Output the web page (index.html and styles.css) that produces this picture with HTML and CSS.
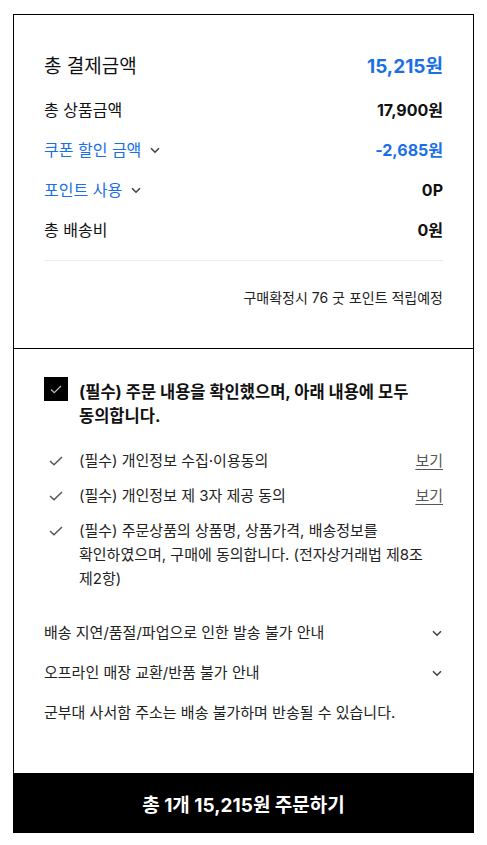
FILE: index.html
```html
<!DOCTYPE html>
<html lang="ko">
<head>
<meta charset="utf-8">
<link rel="stylesheet" href="styles.css">
</head>
<body>
<div class="box">
  <section class="summary">
    <div class="row row-total">
      <span class="label">총 결제금액</span>
      <span class="value blue">15,215원</span>
    </div>
    <div class="row">
      <span class="label">총 상품금액</span>
      <span class="value">17,900원</span>
    </div>
    <div class="row">
      <span class="label blue toggle">쿠폰 할인 금액
        <svg class="chev" width="10" height="7" viewBox="0 0 10 7"><path d="M1 1.2l4 4 4-4" fill="none" stroke="#444" stroke-width="1.6"/></svg>
      </span>
      <span class="value blue">-2,685원</span>
    </div>
    <div class="row">
      <span class="label blue toggle">포인트 사용
        <svg class="chev" width="10" height="7" viewBox="0 0 10 7"><path d="M1 1.2l4 4 4-4" fill="none" stroke="#444" stroke-width="1.6"/></svg>
      </span>
      <span class="value">0P</span>
    </div>
    <div class="row">
      <span class="label">총 배송비</span>
      <span class="value">0원</span>
    </div>
    <div class="divider"></div>
    <p class="earn">구매확정시 76 굿 포인트 적립예정</p>
  </section>

  <section class="agree">
    <div class="all">
      <span class="checkbox">
        <svg width="12" height="9" viewBox="0 0 12 9"><path d="M1 4.5l3.3 3.2L11 1" fill="none" stroke="#bbb" stroke-width="1.3"/></svg>
      </span>
      <p class="all-text">(필수) 주문 내용을 확인했으며, 아래 내용에 모두 동의합니다.</p>
    </div>
    <ul class="items">
      <li class="item">
        <svg class="tick" width="14" height="10" viewBox="0 0 14 10"><path d="M1 5l4 3.8L13 1" fill="none" stroke="#555" stroke-width="1.5"/></svg>
        <span class="item-text">(필수) 개인정보 수집·이용동의</span>
        <a class="view">보기</a>
      </li>
      <li class="item">
        <svg class="tick" width="14" height="10" viewBox="0 0 14 10"><path d="M1 5l4 3.8L13 1" fill="none" stroke="#555" stroke-width="1.5"/></svg>
        <span class="item-text">(필수) 개인정보 제 3자 제공 동의</span>
        <a class="view">보기</a>
      </li>
      <li class="item">
        <svg class="tick" width="14" height="10" viewBox="0 0 14 10"><path d="M1 5l4 3.8L13 1" fill="none" stroke="#555" stroke-width="1.5"/></svg>
        <span class="item-text">(필수) 주문상품의 상품명, 상품가격, 배송정보를 확인하였으며, 구매에 동의합니다. (전자상거래법 제8조 제2항)</span>
      </li>
    </ul>
    <div class="acc">
      <span>배송 지연/품절/파업으로 인한 발송 불가 안내</span>
      <svg class="chev" width="10" height="7" viewBox="0 0 10 7"><path d="M1 1.2l4 4 4-4" fill="none" stroke="#444" stroke-width="1.6"/></svg>
    </div>
    <div class="acc">
      <span>오프라인 매장 교환/반품 불가 안내</span>
      <svg class="chev" width="10" height="7" viewBox="0 0 10 7"><path d="M1 1.2l4 4 4-4" fill="none" stroke="#444" stroke-width="1.6"/></svg>
    </div>
    <p class="notice">군부대 사서함 주소는 배송 불가하며 반송될 수 있습니다.</p>
  </section>

  <button class="order">총 1개 15,215원 주문하기</button>
</div>
</body>
</html>
```

FILE: styles.css
```css
* { box-sizing: border-box; }
html, body { margin: 0; padding: 0; background: #fff; }
body {
  font-family: Inter, "Noto Sans CJK KR", sans-serif;
  color: #111;
  word-break: keep-all;
}
.box {
  margin: 14px 13px 0;
  width: 461px;
  border: 1px solid #000;
  border-bottom: none;
}
.summary {
  padding: 40px 30px 40px;
  display: flex;
  flex-direction: column;
}
.row {
  display: flex;
  justify-content: space-between;
  align-items: center;
  font-size: 16px;
  line-height: 22px;
  margin-top: 18px;
}
.row-total {
  font-size: 19px;
  line-height: 24px;
  margin-top: 0;
}
.row-total + .row { margin-top: 20px; }
.value { font-weight: 700; }
.blue { color: #1a6fe6; }
.toggle { display: flex; align-items: center; }
.toggle .chev { margin-left: 9px; margin-top: 1px; }
.divider {
  height: 1px;
  background: #ececec;
  margin-top: 19px;
}
.earn {
  margin: 27px 0 0;
  text-align: right;
  font-size: 14px;
  line-height: 20px;
  color: #222;
}
.agree {
  border-top: 1px solid #000;
  padding: 28px 30px 48px;
}
.all {
  display: flex;
  align-items: flex-start;
  gap: 11px;
}
.checkbox {
  flex: none;
  width: 24px;
  height: 24px;
  background: #000;
  display: flex;
  align-items: center;
  justify-content: center;
}
.all-text {
  margin: 3px 0 0;
  font-size: 16.5px;
  font-weight: 700;
  line-height: 24px;
  padding-right: 20px;
}
.items {
  list-style: none;
  margin: 21px 0 0;
  padding: 0;
  display: flex;
  flex-direction: column;
  gap: 11px;
}
.item {
  display: flex;
  align-items: flex-start;
  font-size: 15px;
  line-height: 24px;
  color: #222;
}
.tick { flex: none; margin: 7px 16px 0 5px; }
.item-text { flex: 1; }
.view {
  flex: none;
  color: #555;
  text-decoration: underline;
  text-underline-offset: 3px;
  margin-left: 12px;
}
.acc {
  display: flex;
  justify-content: space-between;
  align-items: center;
  font-size: 15px;
  line-height: 24px;
  margin-top: 16px;
  color: #222;
}
.items + .acc { margin-top: 30px; }
.acc .chev { margin-right: 1px; }
.notice {
  margin: 16px 0 0;
  font-size: 15px;
  line-height: 24px;
  color: #222;
}
.order {
  display: block;
  width: calc(100% + 2px);
  margin: 0 -1px;
  height: 60px;
  border: none;
  background: #000;
  color: #fff;
  font-family: Inter, "Noto Sans CJK KR", sans-serif;
  font-size: 19px;
  font-weight: 700;
  padding: 0;
}
```
